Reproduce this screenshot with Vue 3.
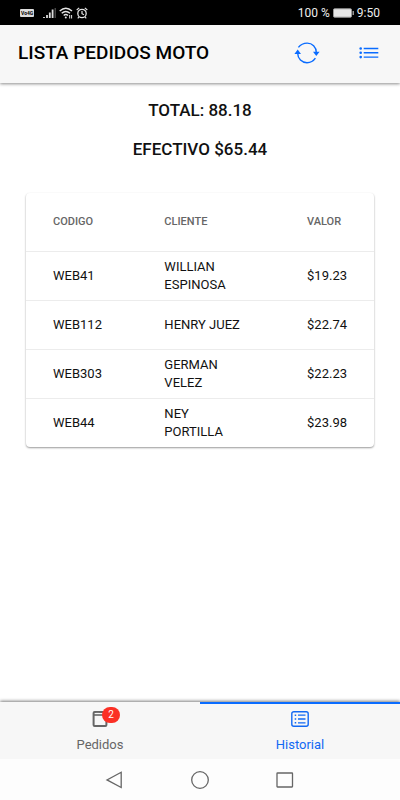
<script setup>
const orders = [
  { code: 'WEB41', client: 'WILLIAN ESPINOSA', value: '$19.23' },
  { code: 'WEB112', client: 'HENRY JUEZ', value: '$22.74' },
  { code: 'WEB303', client: 'GERMAN VELEZ', value: '$22.23' },
  { code: 'WEB44', client: 'NEY PORTILLA', value: '$23.98' }
]
</script>

<template>
  <div class="screen">
    <div class="status">
      <div class="status-group">
        <span class="volte">Vo4G</span>
        <svg class="signal" width="14" height="12" viewBox="0 0 14 12" aria-hidden="true">
          <path d="M2 10v1M5 8v3M7.8 5.5V11M10.6 2.5V11" stroke="#ddd" stroke-width="1.8" />
          <path d="M13.2 1v10" stroke="#555" stroke-width="1.2" />
        </svg>
        <svg width="14" height="12" viewBox="0 0 14 12" fill="none" stroke="#e4e4e4" aria-hidden="true">
          <path d="M.7 4Q6.8-1.5 13 4M2.7 6.3Q6.8 2.6 11 6.3M4.7 8.5Q6.8 6.5 9 8.5" stroke-width="1.4" />
          <circle cx="6.8" cy="10.4" r="1" fill="#e4e4e4" stroke="none" />
          <path d="M10.7 8v3.5M12.6 8v3.5" stroke-width="1" />
        </svg>
        <svg width="12" height="12" viewBox="0 0 12 12" fill="none" stroke="#e4e4e4" aria-hidden="true">
          <circle cx="6" cy="6.5" r="4.2" stroke-width="1.3" />
          <path d="M6 4v2.7l2 1.1M.7 3 3.2.9M11.3 3 8.8.9M2.8 10l-1 1.3M9.2 10l1 1.3" stroke-width="1.2" />
        </svg>
      </div>
      <div class="status-group right">
        <span>100 %</span>
        <svg width="21" height="10" viewBox="0 0 21 10" aria-hidden="true">
          <rect x=".5" y=".8" width="18" height="8.4" rx="1" fill="#e8e8e8" stroke="#999" />
          <path d="M20.2 3v4" stroke="#bbb" stroke-width="1.2" />
        </svg>
        <span>9:50</span>
      </div>
    </div>

    <header class="toolbar">
      <h1>LISTA PEDIDOS MOTO</h1>
      <button type="button" class="tool" aria-label="Actualizar">
        <svg width="26" height="22" viewBox="0 0 26 22" fill="none" stroke="#0a6cff" stroke-width="1.4" aria-hidden="true">
          <path d="M4.4 5.4C7 2 10 1.1 13.2 1.1c5 0 9.1 4 9.1 9.4M21.4 16.2c-2.2 3.3-5 4.5-8.4 4.5-5.1 0-9.3-4-9.3-9.5" />
          <path d="M19 9.7h6.6l-3.3 4.3zM.4 12h6.6L3.7 7.6z" fill="#0a6cff" stroke="none" />
        </svg>
      </button>
      <button type="button" class="tool" aria-label="Lista">
        <svg width="20" height="12" viewBox="0 0 20 12" fill="#0a6cff" stroke="#0a6cff" aria-hidden="true">
          <path d="M4.7 1.5h14.6M4.7 5.8h14.6M4.7 10.1h14.6" stroke-width="1.4" />
          <g stroke="none"><circle cx="1.7" cy="1.5" r="1.3" /><circle cx="1.7" cy="5.8" r="1.3" /><circle cx="1.7" cy="10.1" r="1.3" /></g>
        </svg>
      </button>
    </header>

    <main>
      <h2>TOTAL: 88.18</h2>
      <h2>EFECTIVO $65.44</h2>
      <div class="card">
        <table>
          <thead>
            <tr>
              <th scope="col" class="code">CODIGO</th>
              <th scope="col" class="client">CLIENTE</th>
              <th scope="col">VALOR</th>
            </tr>
          </thead>
          <tbody>
            <tr v-for="order in orders" :key="order.code">
              <td>{{ order.code }}</td>
              <td class="client">{{ order.client }}</td>
              <td>{{ order.value }}</td>
            </tr>
          </tbody>
        </table>
      </div>
    </main>

    <nav class="tabs">
      <a href="#pedidos" class="tab">
        <span class="tab-icon">
          <svg width="20" height="18" viewBox="0 0 20 18" fill="none" stroke="#666" aria-hidden="true">
            <rect x="3.6" y="1.9" width="12.8" height="14.2" rx="1" stroke-width="2" />
            <path d="M3 5h13.4" stroke-width="1.6" />
            <path d="M5.5 3.4h4" stroke="#f7f7f7" stroke-width="1" />
          </svg>
          <span class="badge">2</span>
        </span>
        <span>Pedidos</span>
      </a>
      <a href="#historial" class="tab active" aria-current="page">
        <span class="tab-icon">
          <svg width="20" height="18" viewBox="0 0 20 18" fill="none" stroke="#1269f3" aria-hidden="true">
            <rect x="1.8" y="1.7" width="16.4" height="14.6" rx="2" stroke-width="1.4" />
            <path d="M8 5.2h7.5M8 9h7.5M8 12.8h7.5" stroke-width="1.3" />
            <path d="M4.7 5.2h1.5M4.7 9h1.5M4.7 12.8h1.5" stroke-width="1.4" />
          </svg>
        </span>
        <span>Historial</span>
      </a>
    </nav>

    <div class="system">
      <button type="button" aria-label="Atrás">
        <svg width="20" height="20" viewBox="0 0 20 20" aria-hidden="true"><path d="M16.2 2.3v15.2L2 9.9z" /></svg>
      </button>
      <button type="button" aria-label="Inicio">
        <svg width="20" height="20" viewBox="0 0 20 20" aria-hidden="true"><circle cx="10" cy="10" r="8.3" /></svg>
      </button>
      <button type="button" aria-label="Recientes">
        <svg width="20" height="20" viewBox="0 0 20 20" aria-hidden="true"><rect x="2" y="3" width="15.5" height="14" rx=".5" /></svg>
      </button>
    </div>
  </div>
</template>

<style>
body {
  margin: 0;
  background: #fff;
}
</style>

<style scoped>
.screen {
  display: flex;
  flex-direction: column;
  min-height: 100vh;
  font-family: Roboto, "Liberation Sans", sans-serif;
  color: #111;
}

.screen * {
  box-sizing: border-box;
}

button {
  display: flex;
  padding: 0;
  border: 0;
  background: none;
}

.status {
  display: flex;
  align-items: center;
  justify-content: space-between;
  height: 25px;
  padding: 0 20px;
  background: #000;
  color: #eee;
}

.status-group {
  display: flex;
  align-items: center;
  gap: 3px;
  font-size: 12px;
  line-height: 16px;
}

.status-group.right {
  gap: 3px;
}

.volte {
  padding: 0 1px;
  margin-right: 5px;
  border-radius: 1px;
  background: #ddd;
  color: #000;
  font-size: 5px;
  font-weight: 700;
  line-height: 8px;
}

.toolbar {
  display: flex;
  align-items: center;
  height: 58px;
  padding: 0 21px 2px 18px;
  background: #f7f7f7;
  box-shadow: 0 1px 3px rgba(0, 0, 0, 0.45);
}

h1 {
  flex: 1;
  margin: 0;
  color: #000;
  font-size: 19px;
  font-weight: 500;
  line-height: 24px;
  white-space: nowrap;
}

.tool + .tool {
  margin-left: 39px;
}

main {
  flex: 1;
  padding: 17px 26px;
}

h2 {
  margin: 0 0 19px;
  font-size: 17px;
  font-weight: 500;
  line-height: 20px;
  text-align: center;
}

.card {
  margin-top: 34px;
  border-radius: 4px;
  background: #fff;
  box-shadow: 0 1px 2px rgba(0, 0, 0, 0.4);
}

table {
  width: 100%;
  border-collapse: collapse;
  table-layout: fixed;
}

th,
td {
  padding: 0 0 0 27px;
  text-align: left;
  font-weight: 400;
}

th {
  height: 58px;
  color: #666;
  font-size: 11px;
  font-weight: 500;
  line-height: 16px;
}

td {
  height: 49px;
  border-top: 1px solid #ececec;
  font-size: 13px;
  line-height: 18px;
}

.code {
  width: 32%;
}

th.client {
  width: 41%;
}

.client {
  padding-right: 32px;
}

.tabs {
  display: flex;
  height: 57px;
  background: #f7f7f7;
  box-shadow: 0 -1px 3px rgba(0, 0, 0, 0.5);
}

.tab {
  display: flex;
  flex: 1;
  flex-direction: column;
  align-items: center;
  gap: 9px;
  padding-top: 6px;
  border-top: 2px solid transparent;
  color: #666;
  font-size: 13px;
  line-height: 16px;
  text-decoration: none;
}

.tab.active {
  border-top-color: #0a6cff;
  color: #1269f3;
}

.tab-icon {
  position: relative;
  display: flex;
}

.badge {
  position: absolute;
  top: -3px;
  left: 12px;
  width: 18px;
  border-radius: 8px;
  background: #fb3025;
  color: #fff;
  font-size: 10px;
  line-height: 16px;
  text-align: center;
}

.system {
  display: flex;
  align-items: center;
  justify-content: center;
  gap: 65px;
  height: 41px;
  background: #fdfdfd;
}

.system svg {
  fill: none;
  stroke: #666;
  stroke-width: 1.3;
}
</style>
